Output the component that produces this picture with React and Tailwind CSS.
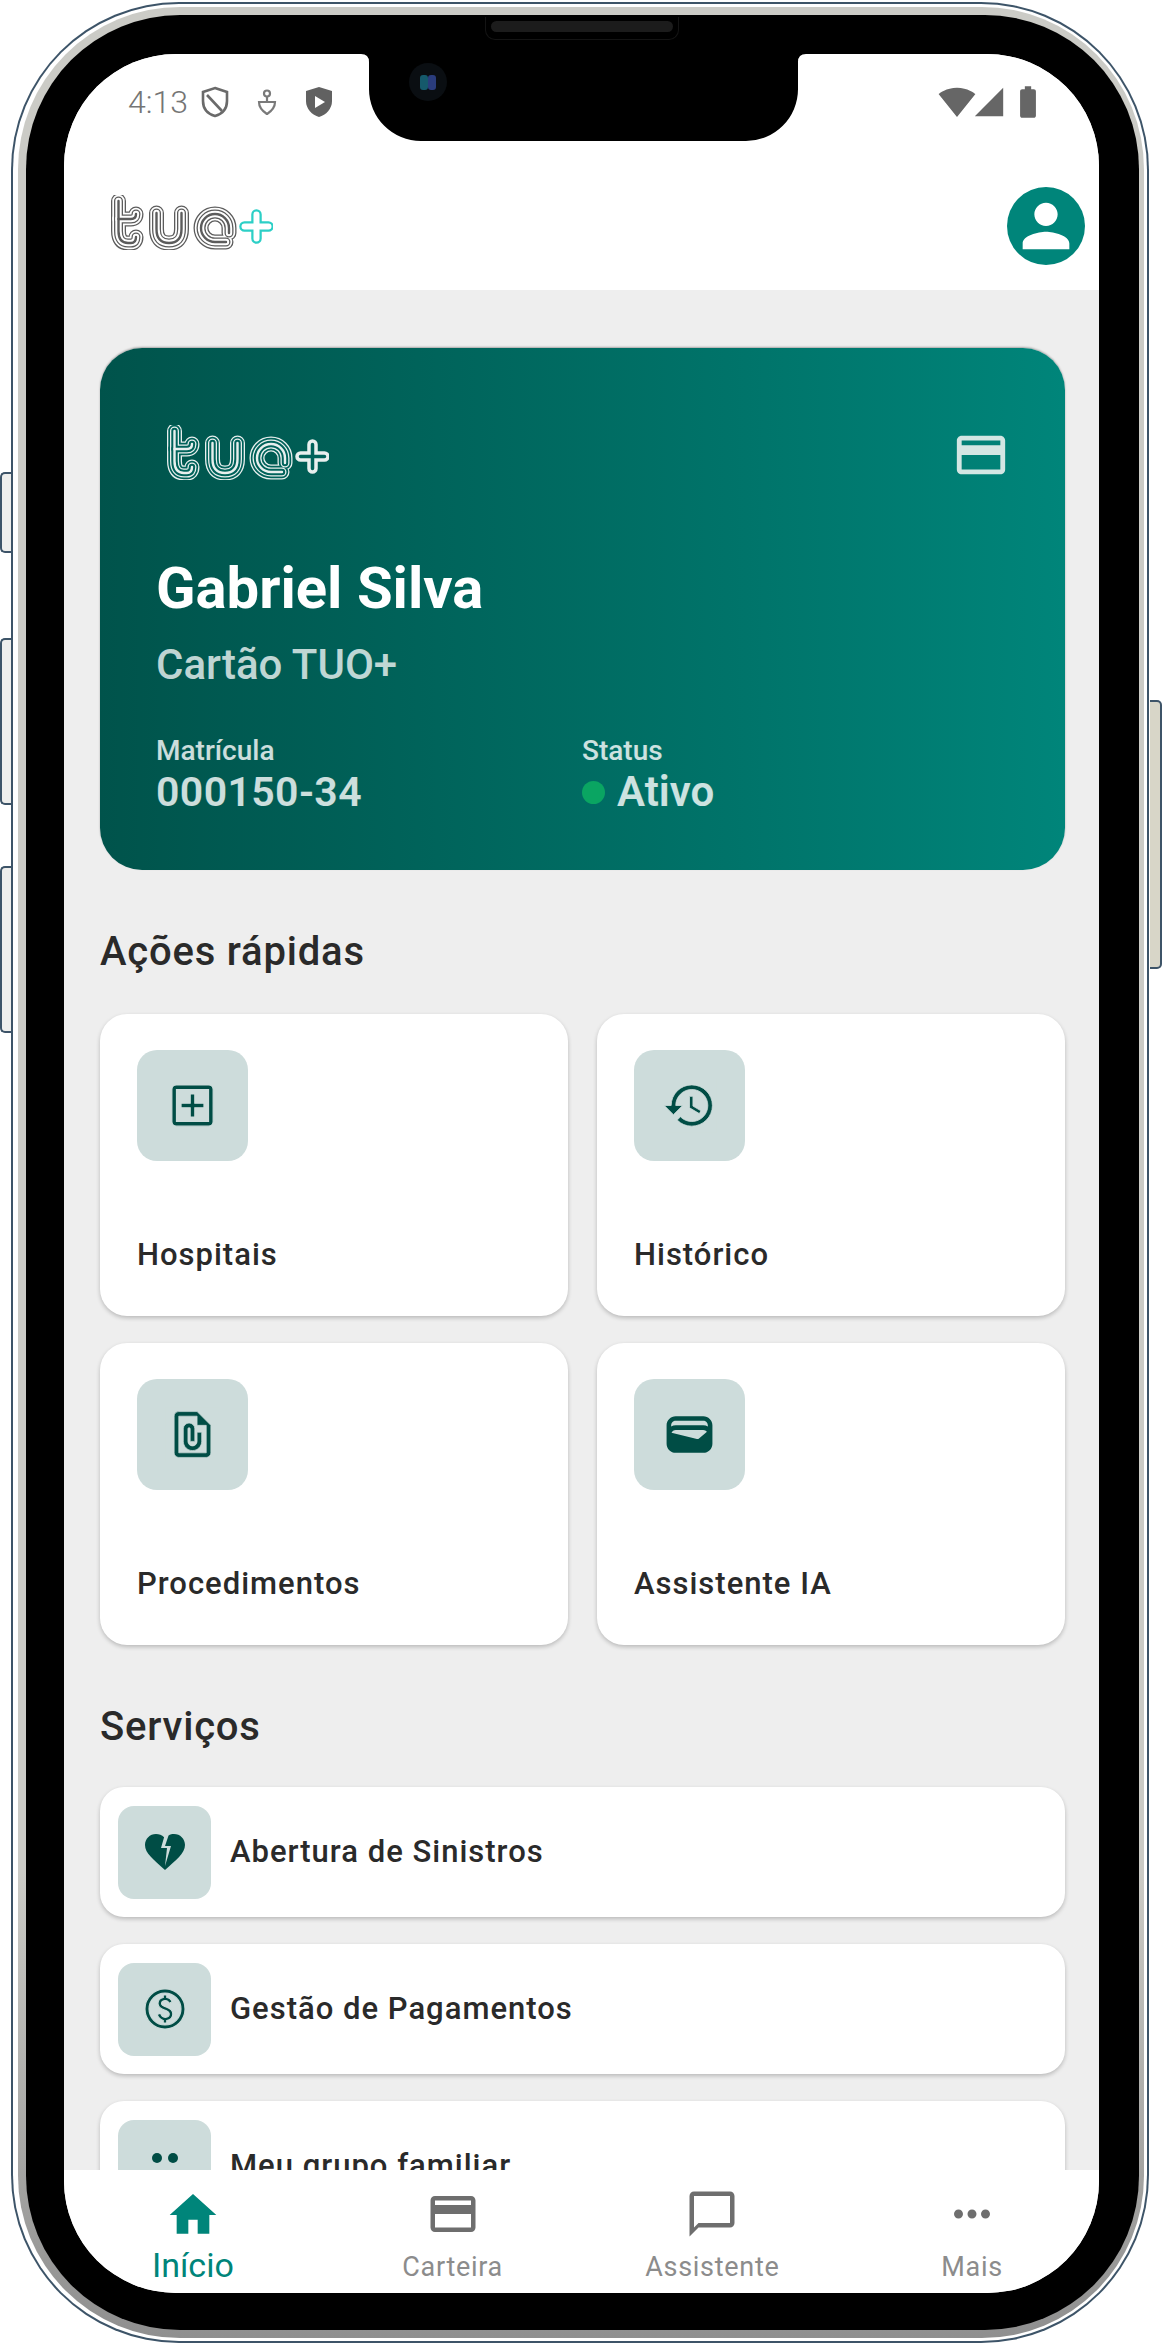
import {
  MdOutlineAddBox,
  MdHistory,
  MdOutlineFilePresent,
  MdWallet,
  MdHeartBroken,
  MdOutlinePaid,
  MdHome,
  MdOutlineCreditCard,
  MdChatBubbleOutline,
  MdMoreHoriz,
  MdPerson,
  MdSignalWifi4Bar,
  MdSignalCellular4Bar,
  MdBatteryFull,
} from 'react-icons/md'

// the two heads are all that shows above the nav bar
const FamilyIcon = ({ size, color }) => (
  <svg width={size} height={size} viewBox="0 0 48 48" fill={color}>
    <circle cx="16" cy="16" r="5" />
    <circle cx="32" cy="16" r="5" />
    <path d="M6 38 V34 C6 30 11 28 16 28 C19 28 22 29 24 30 C26 29 29 28 32 28 C37 28 42 30 42 34 V38 Z" />
  </svg>
)

// thin = stroke in the box colour, eats into the filled glyph
const tiles = [
  { label: 'Hospitais', Icon: MdOutlineAddBox, thin: 0.5 },
  { label: 'Histórico', Icon: MdHistory, thin: 0.35 },
  { label: 'Procedimentos', Icon: MdOutlineFilePresent, thin: 0.3 },
  { label: 'Assistente IA', Icon: MdWallet, thin: 0 },
]

const services = [
  { label: 'Abertura de Sinistros', Icon: MdHeartBroken, thin: 0 },
  { label: 'Gestão de Pagamentos', Icon: MdOutlinePaid, thin: 0.55 },
  { label: 'Meu grupo familiar', Icon: FamilyIcon, thin: 0 },
]

const navItems = [
  { label: 'Início', Icon: MdHome, active: true },
  { label: 'Carteira', Icon: MdOutlineCreditCard },
  { label: 'Assistente', Icon: MdChatBubbleOutline },
  { label: 'Mais', Icon: MdMoreHoriz },
]

const logoLetters = [
  'M8.5 6 V36 Q8.5 48 18 48 H21 Q26 48 26 42',
  'M8.5 24 H21 Q26 24 26 19',
  'M46.5 18 V34 Q46.5 48 59 48 Q71.5 48 71.5 34 V18',
  'M116 47 H105 A14 14 0 1 1 119 33 V38',
]

const Logo = ({ line, gap, plusLine, plusGap, plusWidth }) => (
  <svg width="163" height="55" viewBox="0 0 163 55" fill="none" strokeLinecap="round" strokeLinejoin="round">
    {[
      [15, line],
      [12.4, gap],
      [9, line],
      [6.4, gap],
      [2.4, line],
    ].map(([width, color]) =>
      logoLetters.map(d => <path key={width + d} d={d} stroke={color} strokeWidth={width} />)
    )}
    <path d="M134.5 31.5 H158.5 M146.5 19.5 V43.5" stroke={plusLine} strokeWidth="10.5" />
    <path d="M134.5 31.5 H158.5 M146.5 19.5 V43.5" stroke={plusGap} strokeWidth={plusWidth} />
  </svg>
)

const StatusBar = () => (
  <div className="flex items-center justify-between pl-[64px] pr-[62px] pt-[33px] h-[63px] text-[#757575]">
    <div className="flex items-center">
      <span className="text-[32px] leading-[30px] font-light">4:13</span>
      <svg className="ml-[13px]" width="28" height="32" viewBox="0 0 28 32" fill="none" stroke="#6a6a6a" strokeWidth="2.6">
        <path d="M14 2 L26 6 V15 C26 23 21 28 14 30 C7 28 2 23 2 15 V6 Z" />
        <path d="M6 9 L21 25" />
      </svg>
      <svg className="ml-[28px]" width="20" height="26" viewBox="0 0 20 26" fill="none" stroke="#7a7a7a" strokeWidth="2.2">
        <circle cx="10" cy="4.5" r="3" />
        <path d="M10 8 V12 M2 13 H18 C18 20 13 23 10 25 C7 23 2 20 2 13 Z" />
      </svg>
      <svg className="ml-[28px]" width="28" height="32" viewBox="0 0 28 32">
        <path d="M14 1 L27 5 V15 C27 23 21 29 14 31 C7 29 1 23 1 15 V5 Z" fill="#616161" />
        <path d="M10 10 L20 16 L10 22 Z" fill="#fff" />
      </svg>
    </div>
    <div className="flex items-center">
      <MdSignalWifi4Bar size={38} color="#666" className="-mr-[4px]" />
      <MdSignalCellular4Bar size={34} color="#666" className="mr-[3px]" />
      <MdBatteryFull size={38} color="#666" className="-mr-[10px]" />
    </div>
  </div>
)

const Tile = ({ label, Icon, thin }) => (
  <div className="h-[302px] rounded-[27px] bg-white pl-[37px] pt-[36px] shadow-[0_2px_4px_rgba(0,0,0,0.22)]">
    <div className="flex h-[111px] w-[111px] items-center justify-center rounded-[20px] bg-[#cddcdb]">
      <Icon size={55} color="#004d45" stroke="#cddcdb" strokeWidth={thin} />
    </div>
    <p className="mt-[77px] text-[31px] leading-[34px] font-medium tracking-[1px] text-[#2a2a2a]">{label}</p>
  </div>
)

const ServiceRow = ({ label, Icon, thin }) => (
  <div className="flex h-[130px] shrink-0 items-center gap-[19px] rounded-[24px] bg-white pl-[18px] shadow-[0_2px_4px_rgba(0,0,0,0.22)]">
    <div className="flex h-[93px] w-[93px] items-center justify-center rounded-[16px] bg-[#cddcdb]">
      <Icon size={48} color="#004d45" stroke="#cddcdb" strokeWidth={thin} />
    </div>
    <p className="text-[31px] leading-[34px] font-medium tracking-[1px] text-[#2a2a2a]">{label}</p>
  </div>
)

export default function App() {
  return (
    <div className="relative h-[2345px] w-[1162px] bg-white pl-[11px] pt-[2px] font-['Roboto',sans-serif]">
      {/* side buttons */}
      <div className="absolute left-0 top-[472px] h-[81px] w-[12px] rounded-l-[5px] border-y-2 border-l-2 border-[#3d5468] bg-[#eeeeec]" />
      <div className="absolute left-0 top-[638px] h-[167px] w-[12px] rounded-l-[5px] border-y-2 border-l-2 border-[#3d5468] bg-[#eeeeec]" />
      <div className="absolute left-0 top-[866px] h-[167px] w-[12px] rounded-l-[5px] border-y-2 border-l-2 border-[#3d5468] bg-[#eeeeec]" />
      <div className="absolute right-0 top-[700px] h-[269px] w-[12px] rounded-r-[5px] border-y-2 border-r-2 border-[#3d5468] bg-[#d8d6c8]" />

      {/* phone body */}
      <div className="relative h-[2341px] w-[1138px] rounded-[168px] bg-[#3d5468] p-[2px]">
        <div className="h-full rounded-[166px] bg-white pb-[3px] pl-[5px] pr-[3px] pt-[3px]">
          <div className="h-full rounded-[162px] bg-gradient-to-b from-[#cbcbc6] from-80% to-[#8f8f8f] pb-[8px] pl-[8px] pr-[5px] pt-[8px]">
            <div className="h-full rounded-[154px] bg-black pb-[37px] pl-[38px] pr-[40px] pt-[39px]">
              <div className="relative flex h-full flex-col overflow-hidden rounded-[112px] bg-[#eeeeee]">
                <header className="h-[236px] shrink-0 bg-white">
                  <StatusBar />
                  <div className="mt-[70px] flex items-start justify-between pl-[46px] pr-[14px]">
                    <div className="mt-[8px]">
                      <Logo line="#5c5c5c" gap="#ffffff" plusLine="#2ccfc6" plusGap="#ffffff" plusWidth="6" />
                    </div>
                    <div className="flex h-[78px] w-[78px] items-center justify-center rounded-full bg-[#00857a]">
                      <MdPerson size={70} color="#fff" />
                    </div>
                  </div>
                </header>

                <main className="min-h-0 flex-1 overflow-hidden pl-[36px] pr-[34px] pt-[58px]">
                  <section className="h-[522px] rounded-[42px] bg-gradient-to-r from-[#00534b] to-[#00857a] pl-[56px] pr-[55px] pt-[77px] shadow-[0_-1px_2px_rgba(0,0,0,0.3)]">
                    <div className="flex items-start justify-between">
                      <div className="ml-[10px]">
                        <Logo line="#e8efee" gap="#00625a" plusLine="#e8efee" plusGap="#00625a" plusWidth="3.5" />
                      </div>
                      <MdOutlineCreditCard size={58} color="#d3e6e3" className="mt-[1px]" />
                    </div>
                    <h1 className="mt-[75px] text-[58px] leading-[58px] font-bold text-white">Gabriel Silva</h1>
                    <p className="mt-[26px] text-[42px] leading-[44px] font-medium text-white/75">Cartão TUO+</p>
                    <div className="mt-[49px] grid grid-cols-[426px_1fr]">
                      <div>
                        <p className="text-[28px] leading-[30px] font-medium text-white/80">Matrícula</p>
                        <p className="mt-[4px] text-[41px] leading-[44px] font-semibold tracking-[0.4px] text-white/80">000150-34</p>
                      </div>
                      <div>
                        <p className="text-[28px] leading-[30px] font-medium text-white/80">Status</p>
                        <div className="mt-[4px] flex items-center gap-[12px]">
                          <span className="h-[23px] w-[23px] rounded-full bg-[#0aa562]" />
                          <p className="text-[42px] leading-[44px] font-semibold text-white/80">Ativo</p>
                        </div>
                      </div>
                    </div>
                  </section>

                  <h2 className="mt-[60px] text-[40px] leading-[44px] font-medium tracking-[0.8px] text-[#2a2a2a]">Ações rápidas</h2>
                  <div className="mt-[40px] grid grid-cols-2 gap-x-[29px] gap-y-[27px]">
                    {tiles.map(tile => (
                      <Tile key={tile.label} {...tile} />
                    ))}
                  </div>

                  <h2 className="mt-[60px] text-[40px] leading-[44px] font-medium tracking-[0.8px] text-[#2a2a2a]">Serviços</h2>
                  <div className="mt-[38px] flex flex-col gap-[27px]">
                    {services.map(service => (
                      <ServiceRow key={service.label} {...service} />
                    ))}
                  </div>
                </main>

                <nav className="-ml-[1px] grid h-[123px] w-[1039px] shrink-0 grid-cols-4 bg-white">
                  {navItems.map(({ label, Icon, active }) => (
                    <div key={label} className="flex flex-col items-center pt-[17px]">
                      <Icon size={active ? 56 : 54} color={active ? '#00857a' : '#6e6e6e'} />
                      <span className={active ? 'mt-[4px] text-[34px] leading-[36px] text-[#00857a]' : 'mt-[10px] text-[27px] leading-[32px] tracking-[0.7px] text-[#8c8c8c]'}>
                        {label}
                      </span>
                    </div>
                  ))}
                </nav>

                {/* notch */}
                <svg className="absolute left-[297px] top-0" width="445" height="87" viewBox="0 0 445 87">
                  <path d="M0 0 H445 Q437 0 437 8 V35 A52 52 0 0 1 385 87 H60 A52 52 0 0 1 8 35 V8 Q8 0 0 0 Z" fill="#000" />
                  <circle cx="67" cy="28" r="19" fill="#0a0e12" />
                  <rect x="59" y="21" width="8" height="15" rx="3" fill="#15596b" />
                  <rect x="67" y="21" width="8" height="15" rx="3" fill="#2a3c7c" />
                </svg>
              </div>
            </div>
          </div>
        </div>
        {/* speaker */}
        <div className="absolute left-[474px] top-[15px] h-[23px] w-[194px] rounded-b-[10px] border border-t-0 border-[#141414] px-[5px] pt-[4px]">
          <div className="h-[11px] rounded-full bg-[#1c1c1c]" />
        </div>
      </div>
    </div>
  )
}
